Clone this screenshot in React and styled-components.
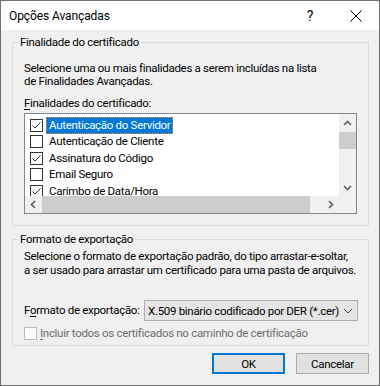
import React from 'react';
import styled, { createGlobalStyle } from 'styled-components';

const GlobalStyle = createGlobalStyle`
  html, body {
    margin: 0;
    padding: 0;
    background: #fff;
  }
  body {
    font-family: Roboto, "Noto Sans", sans-serif;
    font-size: 11.5px;
    letter-spacing: -0.3px;
    color: #000;
  }
`;

const purposes = [
  { label: 'Autenticação do Servidor', checked: true, selected: true },
  { label: 'Autenticação de Cliente', checked: false },
  { label: 'Assinatura do Código', checked: true },
  { label: 'Email Seguro', checked: false },
  { label: 'Carimbo de Data/Hora', checked: true },
];

const Window = styled.div`
  width: 380px;
  height: 386px;
  box-sizing: border-box;
  border: 1px solid #707070;
  background: #f0f0f0;
  display: flex;
  flex-direction: column;
  overflow: hidden;
`;

const TitleBar = styled.div`
  height: 29px;
  flex-shrink: 0;
  background: #fff;
  display: flex;
  align-items: center;
  padding-left: 8px;
`;

const Title = styled.div`
  flex: 1;
  font-size: 12px;
  letter-spacing: -0.1px;
`;

const CaptionButton = styled.div`
  width: 46px;
  height: 29px;
  display: flex;
  align-items: center;
  justify-content: center;
  font-size: 14px;
  letter-spacing: 0;
  color: #000;
`;

const Body = styled.div`
  flex: 1;
  display: flex;
  flex-direction: column;
  padding: 4px 10px 0 11px;
`;

const Group = styled.fieldset`
  margin: 0 0 ${p => p.$gap || 0}px 0;
  padding: 0 10px ${p => p.$bottom}px 11px;
  border: 1px solid #dcdcdc;
  min-width: 0;

  legend {
    padding: 0 2px;
    margin-left: -6px;
    line-height: 16px;
  }
`;

const Text = styled.p`
  margin: ${p => p.$top}px 0 0 0;
  line-height: ${p => p.$lh || 13}px;
  white-space: nowrap;
`;

const Label = styled.div`
  margin-top: ${p => p.$top}px;
  line-height: 13px;
  color: ${p => (p.$disabled ? '#6d6d6d' : '#000')};
  white-space: nowrap;

  u {
    text-decoration-thickness: 1px;
    text-underline-offset: 2px;
  }
`;

const ListBox = styled.div`
  margin-top: 3px;
  width: 333px;
  height: 101px;
  box-sizing: border-box;
  border: 1px solid #828790;
  background: #fff;
  display: grid;
  grid-template-columns: minmax(0, 1fr) 17px;
  grid-template-rows: minmax(0, 1fr) 17px;
`;

const Items = styled.div`
  overflow: hidden;
  padding-top: 3px;
`;

const Item = styled.div`
  height: 16.5px;
  display: flex;
  align-items: center;
  padding-left: 5px;
  white-space: nowrap;
`;

const ItemText = styled.span`
  margin-left: 3px;
  padding: 0 2px;
  line-height: 15px;
  border: 1px ${p => (p.$selected ? 'dotted #ff8728' : 'solid transparent')};
  background: ${p => (p.$selected ? '#0078d7' : 'transparent')};
  color: ${p => (p.$selected ? '#fff' : '#000')};
`;

const Box = styled.span`
  width: 13px;
  height: 13px;
  box-sizing: border-box;
  border: 1px solid ${p => (p.$disabled ? '#bcbcbc' : '#333')};
  background: #fff;
  display: inline-flex;
  flex-shrink: 0;
`;

const VScroll = styled.div`
  background: #f0f0f0;
  display: flex;
  flex-direction: column;
  padding-top: 1px;
  min-height: 0;
`;

const HScroll = styled.div`
  background: #f0f0f0;
  display: flex;
  align-items: stretch;
  min-width: 0;
`;

const Corner = styled.div`
  background: #f0f0f0;
`;

const Arrow = styled.div`
  width: 17px;
  height: 17px;
  display: flex;
  align-items: center;
  justify-content: center;
  flex-shrink: 0;
`;

const Track = styled.div`
  flex: 1;
  display: flex;
  flex-direction: ${p => (p.$vertical ? 'column' : 'row')};
`;

const Thumb = styled.div`
  background: #cdcdcd;
  ${p => (p.$vertical ? 'height: 17px;' : 'width: 268px;')}
`;

const Row = styled.div`
  display: flex;
  align-items: center;
  margin-top: ${p => p.$top}px;
`;

const Select = styled.div`
  margin-left: auto;
  width: 214px;
  height: 21px;
  box-sizing: border-box;
  border: 1px solid #adadad;
  background: #e5e5e5;
  display: flex;
  align-items: center;
  padding: 0 4px 0 3px;
  white-space: nowrap;

  span {
    flex: 1;
  }
`;

const Footer = styled.div`
  display: flex;
  justify-content: flex-end;
  gap: 11px;
  margin-top: 7px;
`;

const Button = styled.button`
  width: 73px;
  height: 21px;
  box-sizing: border-box;
  font: inherit;
  letter-spacing: inherit;
  color: #000;
  background: #e1e1e1;
  border: ${p => (p.$default ? '2px solid #0078d7' : '1px solid #adadad')};
  padding: 0;
`;

const Chevron = ({ dir }) => {
  const pts = {
    up: '5,10 8.5,6.5 12,10',
    down: '5,7 8.5,10.5 12,7',
    left: '10,5 6.5,8.5 10,12',
    right: '7,5 10.5,8.5 7,12',
  }[dir];
  return (
    <svg width="17" height="17" viewBox="0 0 17 17">
      <polyline points={pts} fill="none" stroke="#606060" strokeWidth="1.7" />
    </svg>
  );
};

const Check = ({ checked, disabled }) => (
  <Box $disabled={disabled}>
    {checked && (
      <svg width="11" height="11" viewBox="0 0 11 11">
        <polyline points="1.5,5.5 4,8 9.5,2.5" fill="none" stroke="#333" strokeWidth="1" />
      </svg>
    )}
  </Box>
);

export default function App() {
  return (
    <>
      <GlobalStyle />
      <Window>
        <TitleBar>
          <Title>Opções Avançadas</Title>
          <CaptionButton>?</CaptionButton>
          <CaptionButton>
            <svg width="12" height="12" viewBox="0 0 12 12">
              <path d="M0.5 0.5 L11.5 11.5 M11.5 0.5 L0.5 11.5" stroke="#000" strokeWidth="1" />
            </svg>
          </CaptionButton>
        </TitleBar>
        <Body>
          <Group $bottom={11} $gap={5}>
            <legend>Finalidade do certificado</legend>
            <Text $top={12}>
              Selecione uma ou mais finalidades a serem incluídas na lista
              <br />
              de Finalidades Avançadas.
            </Text>
            <Label $top={9}>
              <u>F</u>inalidades do certificado:
            </Label>
            <ListBox>
              <Items>
                {purposes.map(p => (
                  <Item key={p.label}>
                    <Check checked={p.checked} />
                    <ItemText $selected={p.selected}>{p.label}</ItemText>
                  </Item>
                ))}
              </Items>
              <VScroll>
                <Arrow><Chevron dir="up" /></Arrow>
                <Track $vertical>
                  <Thumb $vertical />
                </Track>
                <Arrow><Chevron dir="down" /></Arrow>
              </VScroll>
              <HScroll>
                <Arrow><Chevron dir="left" /></Arrow>
                <Track>
                  <Thumb />
                </Track>
                <Arrow><Chevron dir="right" /></Arrow>
              </HScroll>
              <Corner />
            </ListBox>
          </Group>
          <Group $bottom={5}>
            <legend>Formato de exportação</legend>
            <Text $top={2} $lh={14}>
              Selecione o formato de exportação padrão, do tipo arrastar-e-soltar,
              <br />
              a ser usado para arrastar um certificado para uma pasta de arquivos.
            </Text>
            <Row $top={23}>
              <Label $top={0}>
                F<u>o</u>rmato de exportação:
              </Label>
              <Select>
                <span>X.509 binário codificado por DER (*.cer)</span>
                <svg width="10" height="6" viewBox="0 0 10 6">
                  <polyline points="1,1 5,5 9,1" fill="none" stroke="#444" strokeWidth="1" />
                </svg>
              </Select>
            </Row>
            <Row $top={6}>
              <Check disabled />
              <Label $top={0} $disabled style={{ marginLeft: 3 }}>
                <u>I</u>ncluir todos os certificados no caminho de certificação
              </Label>
            </Row>
          </Group>
          <Footer>
            <Button $default>OK</Button>
            <Button>Cancelar</Button>
          </Footer>
        </Body>
      </Window>
    </>
  );
}
